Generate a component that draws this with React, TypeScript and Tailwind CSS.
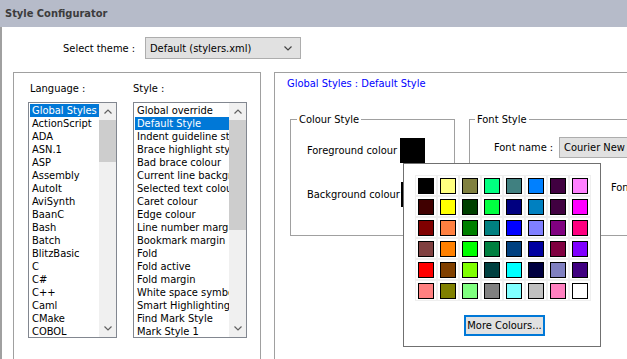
import React from 'react';

const languages = [
  'Global Styles', 'ActionScript', 'ADA', 'ASN.1', 'ASP', 'Assembly', 'AutoIt', 'AviSynth', 'BaanC',
  'Bash', 'Batch', 'BlitzBasic', 'C', 'C#', 'C++', 'Caml', 'CMake', 'COBOL',
];

const styles = [
  'Global override', 'Default Style', 'Indent guideline style', 'Brace highlight style', 'Bad brace colour',
  'Current line background colour', 'Selected text colour', 'Caret colour', 'Edge colour', 'Line number margin',
  'Bookmark margin', 'Fold', 'Fold active', 'Fold margin', 'White space symbol', 'Smart Highlighting',
  'Find Mark Style', 'Mark Style 1',
];

const palette = [
  ['#000000', '#ffff80', '#808040', '#00ff80', '#408080', '#0080ff', '#400040', '#ff80ff'],
  ['#400000', '#ffff00', '#004000', '#00ff40', '#000080', '#0080c0', '#400040', '#ff00ff'],
  ['#800000', '#ff8040', '#008000', '#008080', '#0000ff', '#8080ff', '#800080', '#ff0080'],
  ['#804040', '#ff8000', '#00ff00', '#008040', '#004080', '#0000a0', '#800040', '#8000ff'],
  ['#ff0000', '#804000', '#80ff00', '#004040', '#00ffff', '#000040', '#8080c0', '#400080'],
  ['#ff8080', '#808000', '#80ff80', '#808080', '#80ffff', '#c0c0c0', '#ff80c0', '#ffffff'],
];

const Chevron: React.FC<{ up?: boolean; color?: string }> = ({ up, color = '#606060' }) => (
  <svg width="8" height="5" viewBox="0 0 8 5">
    <polyline
      points={up ? '0.5,4.5 4,1 7.5,4.5' : '0.5,0.5 4,4 7.5,0.5'}
      fill="none"
      stroke={color}
      strokeWidth="1.2"
    />
  </svg>
);

interface ListBoxProps {
  items: string[];
  selected: number;
  thumb: number;
  className?: string;
}

const ListBox: React.FC<ListBoxProps> = ({ items, selected, thumb, className = '' }) => (
  <div className={`flex h-[236px] border border-[#828790] bg-white ${className}`}>
    <div className="min-w-0 flex-1 overflow-hidden pl-[1px] pt-[1px]">
      {items.map((item, i) => (
        <div
          key={item}
          className={`h-[13px] whitespace-nowrap pl-[2px] leading-[13px] ${
            i === selected ? 'bg-[#0078d7] text-white' : 'text-black'
          }`}
        >
          {item}
        </div>
      ))}
    </div>
    <div className="flex w-[17px] flex-col bg-[#f0f0f0]">
      <div className="flex h-[17px] items-center justify-center">
        <Chevron up />
      </div>
      <div className="bg-[#cdcdcd]" style={{ height: thumb }} />
      <div className="flex-1" />
      <div className="flex h-[17px] items-center justify-center">
        <Chevron />
      </div>
    </div>
  </div>
);

export default function App() {
  return (
    <div
      className="relative flex h-[359px] w-[627px] flex-col overflow-hidden bg-white text-[11px] leading-[13px] text-black"
      style={{ fontFamily: '"DejaVu Sans Condensed", "Liberation Sans", sans-serif' }}
    >
      <div className="flex h-[27px] shrink-0 items-center bg-[#b6bbc9] pl-[5px] text-[11px] font-bold text-[#3c3c3c]">
        Style Configurator
      </div>

      <div className="flex-1 border-l-2 border-[#a0a0a0]">
        <div className="mt-[10px] flex items-center pl-[61px]">
          <span className="w-[82px]">Select theme :</span>
          <div className="flex h-[22px] w-[156px] items-center justify-between border border-[#adadad] bg-[#e1e1e1] pl-[4px] pr-[8px]">
            <span>Default (stylers.xml)</span>
            <Chevron color="#444444" />
          </div>
        </div>

        <div className="mt-[13px] flex">
          <div className="ml-[11px] h-[300px] w-[248px] shrink-0 border border-[#a0a0a0] pl-[14px] pt-[9px]">
            <div className="flex gap-[16px]">
              <div className="w-[89px]">
                <div className="pl-[2px]">Language :</div>
                <ListBox items={languages} selected={0} thumb={42} className="mt-[7px]" />
              </div>
              <div className="w-[114px]">
                <div>Style :</div>
                <ListBox items={styles} selected={1} thumb={110} className="mt-[7px]" />
              </div>
            </div>
          </div>

          <div className="ml-[13px] h-[300px] w-[420px] shrink-0 border border-[#a0a0a0] pl-[15px] pt-[4px]">
            <div className="-ml-[3px] text-[#0000ff]">Global Styles : Default Style</div>

            <div className="mt-[23px] flex">
              <fieldset className="h-[123px] w-[165px] shrink-0 border border-[#a0a0a0]">
                <legend className="ml-[6px] px-[2px]">Colour Style</legend>
                <div className="mt-[12px] flex items-center pl-[16px]">
                  <span className="w-[93px]">Foreground colour</span>
                  <div className="h-[25px] w-[25px] bg-black" />
                </div>
                <div className="mt-[19px] flex items-center pl-[16px]">
                  <span className="w-[94px]">Background colour</span>
                  <div className="h-[25px] w-[25px] border-2 border-black bg-white" />
                </div>
              </fieldset>

              <fieldset className="ml-[14px] h-[123px] w-[220px] shrink-0 border border-[#a0a0a0]">
                <legend className="ml-[5px] px-[2px]">Font Style</legend>
                <div className="mt-[11px] flex items-center pl-[24px]">
                  <span className="w-[65px]">Font name :</span>
                  <div className="flex h-[21px] w-[130px] items-center border border-[#adadad] bg-[#e1e1e1] pl-[4px]">
                    Courier New
                  </div>
                </div>
                <div className="mt-[23px] pl-[141px] whitespace-nowrap">Font size :</div>
              </fieldset>
            </div>
          </div>
        </div>
      </div>

      <div className="absolute left-[403px] top-[163px] h-[184px] w-[198px] border border-[#707070] bg-white pl-[11px] pt-[11px]">
        <div className="flex flex-col">
          {palette.map((row, r) => (
            <div key={r} className="flex">
              {row.map((c, i) => (
                <div
                  key={i}
                  className="flex h-[21px] w-[22px] items-center justify-center border border-[#efefef]"
                >
                  <div className="h-[16px] w-[16px] border border-black" style={{ backgroundColor: c }} />
                </div>
              ))}
            </div>
          ))}
        </div>
        <div className="ml-[49px] mt-[14px] flex h-[21px] w-[81px] items-center justify-center border-2 border-[#0078d7] bg-[#e1e1e1]">
          More Colours...
        </div>
      </div>
    </div>
  );
}
